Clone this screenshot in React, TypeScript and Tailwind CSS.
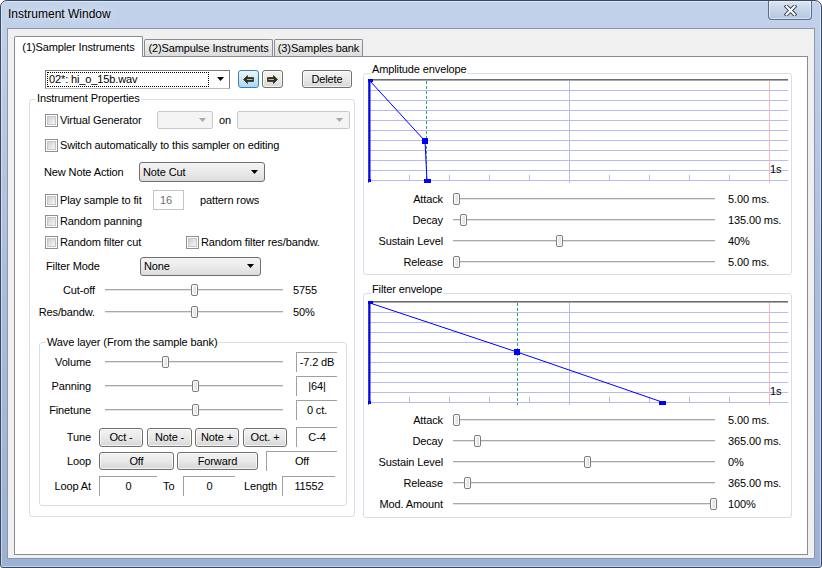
import React from "react";

type Kids = { children?: React.ReactNode };

const Arrow = ({ color = "#000" }: { color?: string }) => (
  <svg width="7" height="4" viewBox="0 0 7 4" className="shrink-0">
    <polygon points="0,0 7,0 3.5,4" fill={color} />
  </svg>
);

const Check = () => (
  <span className="inline-flex h-[13px] w-[13px] shrink-0 border border-[#8e8f8f] bg-white p-[1px]">
    <span className="h-full w-full border border-[#c4c8cc] bg-gradient-to-br from-[#cfcfcf] to-[#f7f7f7]" />
  </span>
);

const Btn = ({ className, children }: { className: string } & Kids) => (
  <div
    className={`flex shrink-0 items-center justify-center rounded-[3px] border border-[#707070] bg-gradient-to-b from-[#f3f3f3] via-[#e9e9e9] to-[#d6d6d6] shadow-[inset_0_0_0_1px_rgba(255,255,255,0.7)] ${className}`}
  >
    {children}
  </div>
);

const Combo = ({ className, text }: { className: string; text: string }) => (
  <div
    className={`flex shrink-0 items-center justify-between rounded-[3px] border border-[#707070] bg-gradient-to-b from-[#f3f3f3] via-[#ebebeb] to-[#dcdcdc] pl-[3px] pr-[6px] ${className}`}
  >
    <span>{text}</span>
    <Arrow />
  </div>
);

const DisCombo = ({ className }: { className: string }) => (
  <div
    className={`flex h-[18px] shrink-0 items-center justify-end rounded-[2px] border border-[#c9c9c9] bg-[#f4f4f4] pr-[6px] ${className}`}
  >
    <Arrow color="#a8a8a8" />
  </div>
);

const Slider = ({ className, pos }: { className: string; pos: number }) => (
  <div className={`relative h-[20px] shrink-0 ${className}`}>
    <div className="absolute left-0 right-0 top-[9px] h-[3px] border-t border-b border-t-[#a8a8a8] border-b-white bg-[#e3e3e3]" />
    <div
      className="absolute top-[4px] h-[12px] w-[7px] rounded-[2px] border border-[#7b7b7b] bg-gradient-to-r from-[#f6f6f6] to-[#d9d9d9] shadow-[inset_0_0_0_1px_#fff]"
      style={{ left: pos }}
    />
  </div>
);

const Val = ({ className, children }: { className: string } & Kids) => (
  <div className={`flex h-[20px] shrink-0 items-center justify-center border-t border-l border-[#a0a0a0] ${className}`}>
    {children}
  </div>
);

const Group = ({
  label,
  labelCls,
  className,
  children,
}: { label: string; labelCls: string; className: string } & Kids) => (
  <div className={`relative rounded-[3px] border border-[#d5dfe5] ${className}`}>
    <span className={`absolute bg-white px-[1px] ${labelCls}`}>{label}</span>
    {children}
  </div>
);

const ArrowIcon = ({ flip }: { flip?: boolean }) => (
  <svg width="11" height="9" viewBox="0 0 11 9" className={flip ? "-scale-x-100" : ""}>
    <polygon points="0.5,4.5 4.5,0.5 4.5,2.5 10.5,2.5 10.5,6.5 4.5,6.5 4.5,8.5" fill="#3a2e1c" stroke="#1b150c" strokeWidth="0.6" />
    <line x1="4" y1="4.5" x2="9.5" y2="4.5" stroke="#c9b58a" strokeWidth="1" />
  </svg>
);

const hLines = [11.5, 21.5, 31.5, 41.5, 51.5, 61.5, 71.5, 81.5, 91.5, 101.5];
const ticks = [41.5, 81.5, 121.5, 161.5, 241.5, 281.5, 321.5, 361.5];

const Graph = ({ dashX, path, mid, end }: { dashX: number; path: string; mid: number[]; end: number }) => (
  <svg width="420" height="104" className="block bg-white">
    {hLines.map((y) => (
      <line key={y} x1="0" x2="420" y1={y} y2={y} stroke="#b9b9f2" />
    ))}
    {ticks.map((x) => (
      <line key={x} x1={x} x2={x} y1="96" y2="102" stroke="#b9b9f2" />
    ))}
    <line x1="201.5" x2="201.5" y1="0" y2="104" stroke="#b9b9f2" />
    <line x1="401.5" x2="401.5" y1="0" y2="104" stroke="#f5b8b8" />
    <line x1={dashX} x2={dashX} y1="2" y2="104" stroke="#3a9c74" strokeDasharray="3 2" />
    <rect x="0" y="0" width="420" height="1" fill="#6d6d6d" />
    <rect x="0" y="1" width="420" height="1" fill="#a9a9a9" />
    <rect x="0" y="0" width="1" height="104" fill="#808080" />
    <line x1="1.5" x2="1.5" y1="2" y2="102" stroke="#0000ff" strokeWidth="2" />
    <polyline points={path} fill="none" stroke="#0000ff" strokeWidth="1" />
    <rect x="0" y="0" width="5" height="3" fill="#0000ff" />
    <rect x="0" y="100" width="3" height="3" fill="#0000ff" />
    <rect x={mid[0] - 3} y={mid[1] - 3} width="6" height="6" fill="#0000ff" />
    <rect x={end - 3} y="100" width="7" height="4" fill="#0000ff" />
    <text x="402" y="94" fontSize="11" fontFamily="Liberation Sans, Arial, sans-serif" fill="#000">
      1s
    </text>
  </svg>
);

const EnvRow = ({ label, pos, value }: { label: string; pos: number; value: string }) => (
  <div className="mt-[1px] flex h-[20px] items-center">
    <span className="w-[79px] shrink-0 text-right">{label}</span>
    <Slider className="ml-[10px] w-[262px]" pos={pos} />
    <span className="ml-[13px]">{value}</span>
  </div>
);

const WaveRow = ({ label, className, children }: { label: string; className: string } & Kids) => (
  <div className={`flex h-[20px] items-center ${className}`}>
    <span className="w-[51px] shrink-0 text-right">{label}</span>
    {children}
  </div>
);

export default function App() {
  return (
    <div className="h-[568px] w-[822px] font-['Liberation_Sans',Arial,sans-serif] text-[11px] leading-[13px] tracking-[-0.12px] text-black">
      <div className="flex h-full flex-col rounded-t-[7px] rounded-b-[3px] border border-[#3a4862] bg-gradient-to-b from-[#c2d2ea] via-[#aabddc] to-[#9db1d5] px-[6px] pb-[8px] shadow-[inset_0_0_0_1px_rgba(255,255,255,0.45)]">
        {/* title bar */}
        <div className="flex h-[27px] shrink-0 items-start justify-between">
          <span className="mt-[6px] ml-[1px] text-[12px] leading-[15px] tracking-normal [text-shadow:0_0_8px_#fff]">Instrument Window</span>
          <div className="mr-[3px] flex h-[19px] w-[44px] items-center justify-center rounded-b-[4px] border border-t-0 border-[#5b6c8d] bg-gradient-to-b from-[#d9e3f2] to-[#b6c6df] shadow-[inset_0_0_0_1px_rgba(255,255,255,0.5)]">
            <svg width="13" height="11" viewBox="0 0 13 11">
              <path d="M2.5 1.5 L10.5 9.5 M10.5 1.5 L2.5 9.5" stroke="#3b4659" strokeWidth="4" strokeLinecap="square" />
              <path d="M2.5 1.5 L10.5 9.5 M10.5 1.5 L2.5 9.5" stroke="#fff" strokeWidth="2" strokeLinecap="square" />
            </svg>
          </div>
        </div>

        {/* client area */}
        <div className="flex flex-1 flex-col border border-[#8a96a9] bg-[#f0f0f0] px-[6px] pt-[7px] pb-[3px]">
          <div className="relative z-10 -mb-[1px] flex h-[21px] items-start">
            <div className="flex h-[21px] w-[129px] items-center justify-center rounded-t-[2px] border border-b-0 border-[#898c95] bg-white">
              (1)Sampler Instruments
            </div>
            <div className="ml-[1px] mt-[3px] flex h-[17px] w-[129px] items-center justify-center rounded-t-[2px] border border-b-0 border-[#898c95] bg-gradient-to-b from-[#f3f3f3] to-[#dcdcdc]">
              (2)Sampulse Instruments
            </div>
            <div className="ml-[1px] mt-[3px] flex h-[17px] w-[89px] items-center justify-center rounded-t-[2px] border border-b-0 border-[#898c95] bg-gradient-to-b from-[#f3f3f3] to-[#dcdcdc]">
              (3)Samples bank
            </div>
          </div>

          <div className="flex flex-1 items-start border border-[#898c95] bg-white pl-[14px] pt-[12px]">
            {/* left column */}
            <div className="w-[326px] shrink-0">
              <div className="flex h-[20px] items-center">
                <div className="ml-[16px] flex h-[19px] w-[185px] items-center border border-[#7a7a7a] border-b-[#b9b9b9] bg-white pl-[1px] pr-[5px]">
                  <span className="flex h-[15px] w-[162px] items-center border border-dotted border-black pl-[1px]">
                    02*: hi_o_15b.wav
                  </span>
                  <span className="ml-auto">
                    <Arrow />
                  </span>
                </div>
                <div className="ml-[8px] flex h-[18px] w-[21px] items-center justify-center rounded-[3px] border border-[#3c7fb1] bg-gradient-to-b from-[#eaf6fd] to-[#a7d9f5]">
                  <ArrowIcon />
                </div>
                <Btn className="ml-[3px] h-[18px] w-[21px]">
                  <ArrowIcon flip />
                </Btn>
                <Btn className="ml-[19px] h-[18px] w-[50px]">Delete</Btn>
              </div>

              <Group label="Instrument Properties" labelCls="top-[-8px] left-[6px]" className="mt-[10px] pt-[10px] pb-[10px]">
                <div className="flex h-[20px] items-center pl-[15px]">
                  <Check />
                  <span className="ml-[2px] w-[97px]">Virtual Generator</span>
                  <DisCombo className="w-[56px]" />
                  <span className="ml-[6px] w-[18px]">on</span>
                  <DisCombo className="w-[113px]" />
                </div>
                <div className="mt-[5px] flex h-[20px] items-center pl-[15px]">
                  <Check />
                  <span className="ml-[2px]">Switch automatically to this sampler on editing</span>
                </div>
                <div className="mt-[7px] flex h-[20px] items-center pl-[14px]">
                  <span className="w-[95px]">New Note Action</span>
                  <Combo className="h-[20px] w-[126px]" text="Note Cut" />
                </div>
                <div className="mt-[8px] flex h-[20px] items-center pl-[15px]">
                  <Check />
                  <span className="ml-[2px] w-[93px]">Play sample to fit</span>
                  <div className="flex h-[20px] w-[31px] items-center border border-[#c2c6cc] pl-[6px] text-[#6d6d6d]">16</div>
                  <span className="ml-[16px]">pattern rows</span>
                </div>
                <div className="mt-[1px] flex h-[20px] items-center pl-[15px]">
                  <Check />
                  <span className="ml-[2px]">Random panning</span>
                </div>
                <div className="mt-[1px] flex h-[20px] items-center pl-[15px]">
                  <Check />
                  <span className="ml-[2px] w-[126px]">Random filter cut</span>
                  <Check />
                  <span className="ml-[2px]">Random filter res/bandw.</span>
                </div>
                <div className="mt-[4px] flex h-[20px] items-center pl-[16px]">
                  <span className="w-[94px]">Filter Mode</span>
                  <Combo className="h-[19px] w-[121px]" text="None" />
                </div>
                <div className="mt-[4px] flex h-[20px] items-center">
                  <span className="w-[65px] shrink-0 text-right">Cut-off</span>
                  <Slider className="ml-[10px] w-[178px]" pos={86} />
                  <span className="ml-[10px]">5755</span>
                </div>
                <div className="mt-[2px] flex h-[20px] items-center">
                  <span className="w-[65px] shrink-0 text-right">Res/bandw.</span>
                  <Slider className="ml-[10px] w-[178px]" pos={86} />
                  <span className="ml-[10px]">50%</span>
                </div>

                <Group
                  label="Wave layer (From the sample bank)"
                  labelCls="top-[-7px] left-[6px]"
                  className="ml-[9px] mt-[20px] w-[308px] pt-[9px] pb-[9px]"
                >
                  <WaveRow label="Volume" className="">
                    <Slider className="ml-[14px] w-[178px]" pos={57} />
                    <Val className="ml-[13px] w-[41px]">-7.2 dB</Val>
                  </WaveRow>
                  <WaveRow label="Panning" className="mt-[4px]">
                    <Slider className="ml-[14px] w-[178px]" pos={87} />
                    <Val className="ml-[13px] w-[41px]">|64|</Val>
                  </WaveRow>
                  <WaveRow label="Finetune" className="mt-[4px]">
                    <Slider className="ml-[14px] w-[178px]" pos={87} />
                    <Val className="ml-[13px] w-[41px]">0 ct.</Val>
                  </WaveRow>
                  <WaveRow label="Tune" className="mt-[7px]">
                    <Btn className="ml-[8px] h-[19px] w-[44px]">Oct -</Btn>
                    <Btn className="ml-[4px] h-[19px] w-[45px]">Note -</Btn>
                    <Btn className="ml-[3px] h-[19px] w-[44px]">Note +</Btn>
                    <Btn className="ml-[4px] h-[19px] w-[44px]">Oct. +</Btn>
                    <Val className="ml-[9px] w-[41px]">C-4</Val>
                  </WaveRow>
                  <WaveRow label="Loop" className="mt-[4px]">
                    <Btn className="ml-[8px] h-[18px] w-[75px]">Off</Btn>
                    <Btn className="ml-[3px] h-[18px] w-[81px]">Forward</Btn>
                    <Val className="ml-[8px] w-[71px]">Off</Val>
                  </WaveRow>
                  <WaveRow label="Loop At" className="mt-[5px]">
                    <Val className="ml-[8px] w-[58px]">0</Val>
                    <span className="ml-[6px] w-[20px]">To</span>
                    <Val className="w-[52px]">0</Val>
                    <span className="ml-[9px] w-[38px]">Length</span>
                    <Val className="w-[53px]">11552</Val>
                  </WaveRow>
                </Group>
              </Group>
            </div>

            {/* right column */}
            <div className="ml-[8px] mt-[4px] w-[429px] shrink-0">
              <Group label="Amplitude envelope" labelCls="top-[-11px] left-[7px]" className="pt-[5px] pb-[2px]">
                <div className="ml-[4px]">
                  <Graph dashX={58.5} path="2,2 57,62 59,102" mid={[57, 62]} end={59} />
                </div>
                <div className="mt-[6px]">
                  <EnvRow label="Attack" pos={0} value="5.00 ms." />
                  <EnvRow label="Decay" pos={7} value="135.00 ms." />
                  <EnvRow label="Sustain Level" pos={103} value="40%" />
                  <EnvRow label="Release" pos={0} value="5.00 ms." />
                </div>
              </Group>

              <Group label="Filter envelope" labelCls="top-[-11px] left-[7px]" className="mt-[18px] pt-[7px] pb-[3px]">
                <div className="ml-[4px]">
                  <Graph dashX={149.5} path="2,2 149,51 294,101" mid={[149, 51]} end={294} />
                </div>
                <div className="mt-[5px]">
                  <EnvRow label="Attack" pos={0} value="5.00 ms." />
                  <EnvRow label="Decay" pos={21} value="365.00 ms." />
                  <EnvRow label="Sustain Level" pos={131} value="0%" />
                  <EnvRow label="Release" pos={11} value="365.00 ms." />
                  <EnvRow label="Mod. Amount" pos={257} value="100%" />
                </div>
              </Group>
            </div>
          </div>
        </div>
      </div>
    </div>
  );
}
